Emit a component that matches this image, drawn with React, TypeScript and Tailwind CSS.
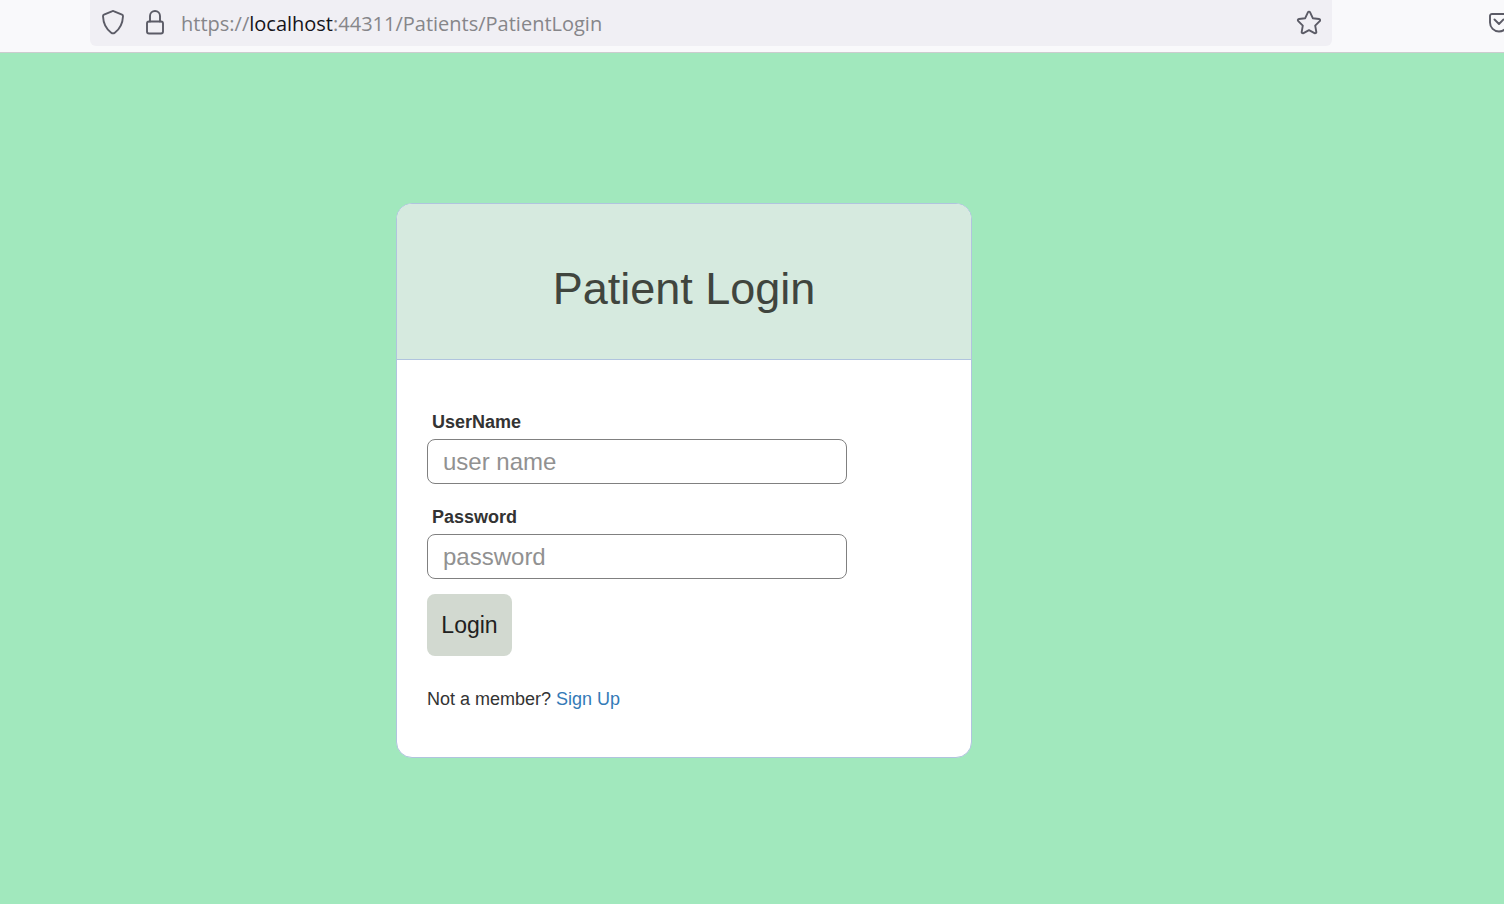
import React, { useState } from "react";

const iconProps = {
  fill: "none",
  stroke: "#5b5b66",
  strokeWidth: 1.9,
  strokeLinecap: "round" as const,
  strokeLinejoin: "round" as const,
  "aria-hidden": true,
};

function ShieldIcon() {
  return (
    <svg width="24" height="26" viewBox="0 0 24 26" {...iconProps}>
      <path d="M12 1 C12.4 1 12.8 1.1 13.1 1.3 L21 4.6 C21.7 4.9 22.1 5.5 22 6.3 C21.7 13 19.2 18.8 13.8 22.7 C12.7 23.5 11.3 23.5 10.2 22.7 C4.8 18.8 2.3 13 2 6.3 C1.9 5.5 2.3 4.9 3 4.6 L10.9 1.3 C11.2 1.1 11.6 1 12 1 Z" />
    </svg>
  );
}

function LockIcon() {
  return (
    <svg width="20" height="26" viewBox="0 0 20 26" {...iconProps}>
      <rect x="2" y="11.5" width="16" height="12" rx="2" />
      <path d="M5 11.5 V6 A5 5 0 0 1 15 6 V11.5" />
    </svg>
  );
}

function StarIcon() {
  return (
    <svg width="26" height="26" viewBox="0 0 26 26" {...iconProps}>
      <path d="M12.9 2.3 C13.3 1.4 14.7 1.4 15.1 2.3 L17.8 8.2 L24 9 C25.2 9.2 25.5 10.4 24.7 11.2 L20.2 15.7 L21.3 21.8 C21.5 22.9 20.5 23.6 19.5 23.1 L14 20.1 L8.5 23.1 C7.5 23.6 6.5 22.9 6.7 21.8 L7.8 15.7 L3.3 11.2 C2.5 10.4 2.8 9.2 4 9 L10.2 8.2 Z" />
    </svg>
  );
}

function PocketIcon() {
  return (
    <svg className="shrink-0" width="22" height="22" viewBox="0 0 22 22" {...iconProps}>
      <path d="M3 2 H17 C18 2 19 2.7 19 3.8 V10.5 A9 9 0 0 1 1 10.5 V3.8 C1 2.7 2 2 3 2 Z" />
      <path d="M5.5 7.5 L10 12 L14.5 7.5" />
    </svg>
  );
}

function Toolbar() {
  return (
    <header className="flex h-[53px] items-start overflow-hidden border-b border-[#cccccf] bg-[#f9f9fb] pl-[90px]">
      <div className="flex h-[46px] min-w-0 flex-1 items-center rounded-b-md bg-[#f0eff4] px-[11px]">
        <button type="button" aria-label="Tracking protection" className="shrink-0">
          <ShieldIcon />
        </button>
        <button type="button" aria-label="Site information" className="ml-5 shrink-0">
          <LockIcon />
        </button>
        <div className="ml-4 min-w-0 flex-1 truncate pt-px font-['Open_Sans',sans-serif] text-[20px] leading-7 text-[#86868a]">
          https://<span className="text-[#15141a]">localhost</span>:44311/Patients/PatientLogin
        </div>
        <button type="button" aria-label="Bookmark this page" className="shrink-0">
          <StarIcon />
        </button>
      </div>
      <button
        type="button"
        aria-label="Save to Pocket"
        className="ml-[157px] flex h-[46px] w-[15px] shrink-0 items-center justify-start overflow-hidden"
      >
        <PocketIcon />
      </button>
    </header>
  );
}

interface FieldProps {
  id: string;
  label: string;
  type: string;
  placeholder: string;
  value: string;
  onChange: (value: string) => void;
}

function Field({ id, label, type, placeholder, value, onChange }: FieldProps) {
  return (
    <div className="flex w-full max-w-[420px] flex-col gap-1">
      <label htmlFor={id} className="pl-[5px] text-[18px] leading-[26px] font-bold text-[#333333]">
        {label}
      </label>
      <input
        id={id}
        type={type}
        placeholder={placeholder}
        value={value}
        onChange={(event) => onChange(event.target.value)}
        className="h-[45px] w-full rounded-lg border border-[#808080] bg-white px-[15px] text-[24px] text-[#333333] placeholder:text-[#919191]"
      />
    </div>
  );
}

export default function App() {
  const [userName, setUserName] = useState("");
  const [password, setPassword] = useState("");

  return (
    <div className="flex min-h-screen flex-col bg-[#a1e8bd] font-['Liberation_Sans',Arial,sans-serif]">
      <Toolbar />
      <main className="flex flex-1 items-start justify-center pt-[150px] pr-[136px] pb-10">
        <section className="w-full max-w-[576px] overflow-hidden rounded-2xl border border-[#b0c4de] bg-white">
          <div className="border-b border-[#b0c4de] bg-[#d6eadf] pt-[60px] pb-[45px]">
            <h1 className="text-center text-[45px] leading-[50px] text-[#40453e]">Patient Login</h1>
          </div>
          <form
            className="flex flex-col items-start px-[30px] pt-[49px] pb-[45px]"
            onSubmit={(event) => event.preventDefault()}
          >
            <div className="flex w-full flex-col gap-5">
              <Field
                id="username"
                label="UserName"
                type="text"
                placeholder="user name"
                value={userName}
                onChange={setUserName}
              />
              <Field
                id="password"
                label="Password"
                type="password"
                placeholder="password"
                value={password}
                onChange={setPassword}
              />
            </div>
            <button
              type="submit"
              className="mt-[15px] h-[62px] min-w-[85px] rounded-lg bg-[#d2d9d0] px-3.5 text-[23px] text-[#212121]"
            >
              Login
            </button>
            <p className="mt-[30px] text-[18px] leading-[26px] text-[#333333]">
              Not a member?{" "}
              <a href="#signup" className="text-[#337ab7]">
                Sign Up
              </a>
            </p>
          </form>
        </section>
      </main>
    </div>
  );
}
